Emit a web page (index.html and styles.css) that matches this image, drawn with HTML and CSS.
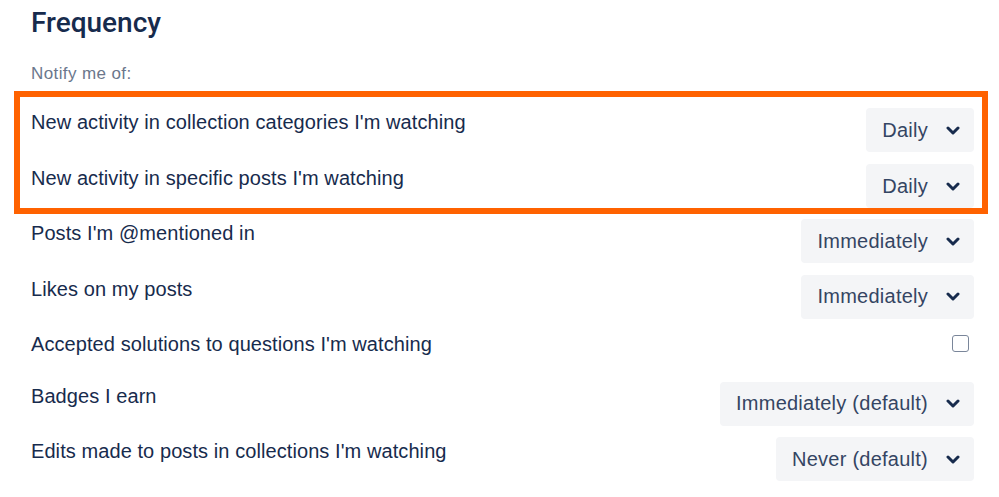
FILE: index.html
```html
<!DOCTYPE html>
<html lang="en">
<head>
<meta charset="utf-8">
<title>Frequency</title>
<link rel="stylesheet" href="styles.css">
</head>
<body>
<div class="page">
  <h1 class="title">Frequency</h1>
  <div class="subtitle">Notify me of:</div>
  <div class="highlight">
    <div class="row">
      <div class="label">New activity in collection categories I'm watching</div>
      <button class="select">Daily <svg class="chev" width="14" height="9" viewBox="0 0 14 9"><path d="M2 2 L7 7 L12 2" fill="none" stroke="currentColor" stroke-width="3" stroke-linecap="round" stroke-linejoin="round"/></svg></button>
    </div>
    <div class="row">
      <div class="label">New activity in specific posts I'm watching</div>
      <button class="select">Daily <svg class="chev" width="14" height="9" viewBox="0 0 14 9"><path d="M2 2 L7 7 L12 2" fill="none" stroke="currentColor" stroke-width="3" stroke-linecap="round" stroke-linejoin="round"/></svg></button>
    </div>
  </div>
  <div class="rows">
    <div class="row">
      <div class="label">Posts I'm @mentioned in</div>
      <button class="select">Immediately <svg class="chev" width="14" height="9" viewBox="0 0 14 9"><path d="M2 2 L7 7 L12 2" fill="none" stroke="currentColor" stroke-width="3" stroke-linecap="round" stroke-linejoin="round"/></svg></button>
    </div>
    <div class="row">
      <div class="label">Likes on my posts</div>
      <button class="select">Immediately <svg class="chev" width="14" height="9" viewBox="0 0 14 9"><path d="M2 2 L7 7 L12 2" fill="none" stroke="currentColor" stroke-width="3" stroke-linecap="round" stroke-linejoin="round"/></svg></button>
    </div>
    <div class="row row-check">
      <div class="label">Accepted solutions to questions I'm watching</div>
      <span class="checkbox"></span>
    </div>
    <div class="row">
      <div class="label">Badges I earn</div>
      <button class="select">Immediately (default) <svg class="chev" width="14" height="9" viewBox="0 0 14 9"><path d="M2 2 L7 7 L12 2" fill="none" stroke="currentColor" stroke-width="3" stroke-linecap="round" stroke-linejoin="round"/></svg></button>
    </div>
    <div class="row">
      <div class="label">Edits made to posts in collections I'm watching</div>
      <button class="select">Never (default) <svg class="chev" width="14" height="9" viewBox="0 0 14 9"><path d="M2 2 L7 7 L12 2" fill="none" stroke="currentColor" stroke-width="3" stroke-linecap="round" stroke-linejoin="round"/></svg></button>
    </div>
  </div>
</div>
</body>
</html>
```
FILE: styles.css
```css
* { box-sizing: border-box; }
html, body { margin: 0; padding: 0; background: #fff; }
body {
  font-family: "Liberation Sans", Arial, sans-serif;
  color: #172B4D;
  width: 999px;
  height: 497px;
  overflow: hidden;
}
.page {
  padding: 0 25px 0 31px;
}
.title {
  margin: 6px 0 0;
  font-family: Roboto, "Liberation Sans", sans-serif;
  font-size: 28px;
  line-height: 34px;
  font-weight: 500;
  color: #172B4D;
}
.subtitle {
  margin-top: 24px;
  font-size: 17px;
  line-height: 20px;
  letter-spacing: 0.4px;
  color: #6B778C;
}
.highlight {
  margin: 7px -14px 5px -17px;
  border: 6px solid #FF6200;
  padding: 11px 8px 0 11px;
  display: flex;
  flex-direction: column;
  gap: 12px;
}
.rows {
  display: flex;
  flex-direction: column;
  gap: 11.5px;
}
.row {
  display: flex;
  justify-content: space-between;
  align-items: flex-start;
  min-height: 44px;
}
.row-check { min-height: 40px; }
.label {
  font-size: 20px;
  line-height: 29px;
  letter-spacing: 0.08px;
  color: #172B4D;
}
.select {
  display: flex;
  align-items: center;
  gap: 18px;
  height: 44px;
  padding: 0 14px 0 16px;
  border: none;
  border-radius: 4px;
  background: #F4F5F7;
  font-family: inherit;
  font-size: 20px;
  letter-spacing: 0.25px;
  color: #344563;
  cursor: pointer;
}
.chev { color: #172B4D; display: block; }
.checkbox {
  display: block;
  width: 17px;
  height: 17px;
  margin: 5px 5px 0 0;
  border: 1.5px solid #7A869A;
  border-radius: 3px;
  background: #fff;
}
```
